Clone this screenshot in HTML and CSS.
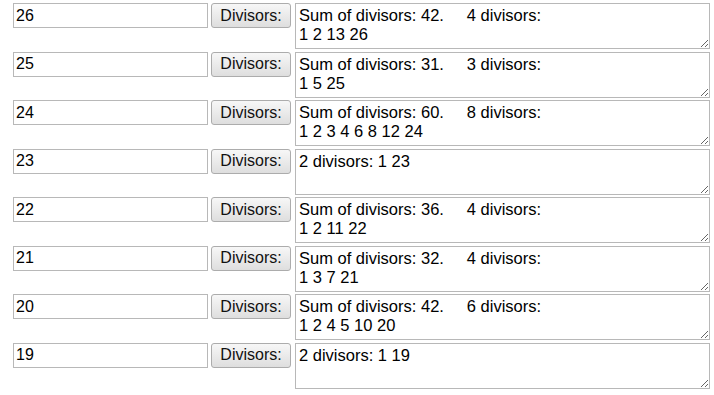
FILE: index.html
```html
<!DOCTYPE html>
<html lang="en">
<head>
    <meta charset="UTF-8">
    <title>Divisors</title>
    <link rel="stylesheet" href="styles.css">
</head>
<body>

    <div class="list">
        <div class="row">
            <input type="text" value="26">
            <button>Divisors:</button>
            <textarea>Sum of divisors: 42.     4 divisors:
1 2 13 26</textarea>
        </div>
        <div class="row">
            <input type="text" value="25">
            <button>Divisors:</button>
            <textarea>Sum of divisors: 31.     3 divisors:
1 5 25</textarea>
        </div>
        <div class="row">
            <input type="text" value="24">
            <button>Divisors:</button>
            <textarea>Sum of divisors: 60.     8 divisors:
1 2 3 4 6 8 12 24</textarea>
        </div>
        <div class="row">
            <input type="text" value="23">
            <button>Divisors:</button>
            <textarea>2 divisors: 1 23</textarea>
        </div>
        <div class="row">
            <input type="text" value="22">
            <button>Divisors:</button>
            <textarea>Sum of divisors: 36.     4 divisors:
1 2 11 22</textarea>
        </div>
        <div class="row">
            <input type="text" value="21">
            <button>Divisors:</button>
            <textarea>Sum of divisors: 32.     4 divisors:
1 3 7 21</textarea>
        </div>
        <div class="row">
            <input type="text" value="20">
            <button>Divisors:</button>
            <textarea>Sum of divisors: 42.     6 divisors:
1 2 4 5 10 20</textarea>
        </div>
        <div class="row">
            <input type="text" value="19">
            <button>Divisors:</button>
            <textarea>2 divisors: 1 19</textarea>
        </div>
    </div>

</body>
</html>
```

FILE: styles.css
```css
body {
    margin: 0;
    padding: 3px 0 0 13px;
    background: #fff;
    font-family: "Liberation Sans", Arial, sans-serif;
    color: #000;
}
.list {
    display: flex;
    flex-direction: column;
    gap: 2.5px;
}
.row {
    display: flex;
    align-items: flex-start;
}
.row input {
    box-sizing: border-box;
    width: 195px;
    height: 25px;
    margin: 0;
    padding: 1px 2px;
    border: 1px solid #b8b8b8;
    font-family: inherit;
    font-size: 16px;
    color: #000;
    background: #fff;
}
.row button {
    box-sizing: border-box;
    width: 80px;
    height: 25px;
    margin: 0 0 0 3px;
    padding: 0;
    border: 1px solid #acacac;
    border-radius: 3px;
    background: linear-gradient(to bottom, #f7f7f7, #dedede);
    font-family: inherit;
    font-size: 16px;
    color: #111;
}
.row textarea {
    box-sizing: border-box;
    width: 415px;
    height: 46px;
    margin: 0 0 0 4px;
    padding: 2px 3px;
    border: 1px solid #b8b8b8;
    font-family: inherit;
    font-size: 16.5px;
    line-height: 19px;
    color: #000;
    background: #fff;
    overflow: hidden;
}
```
